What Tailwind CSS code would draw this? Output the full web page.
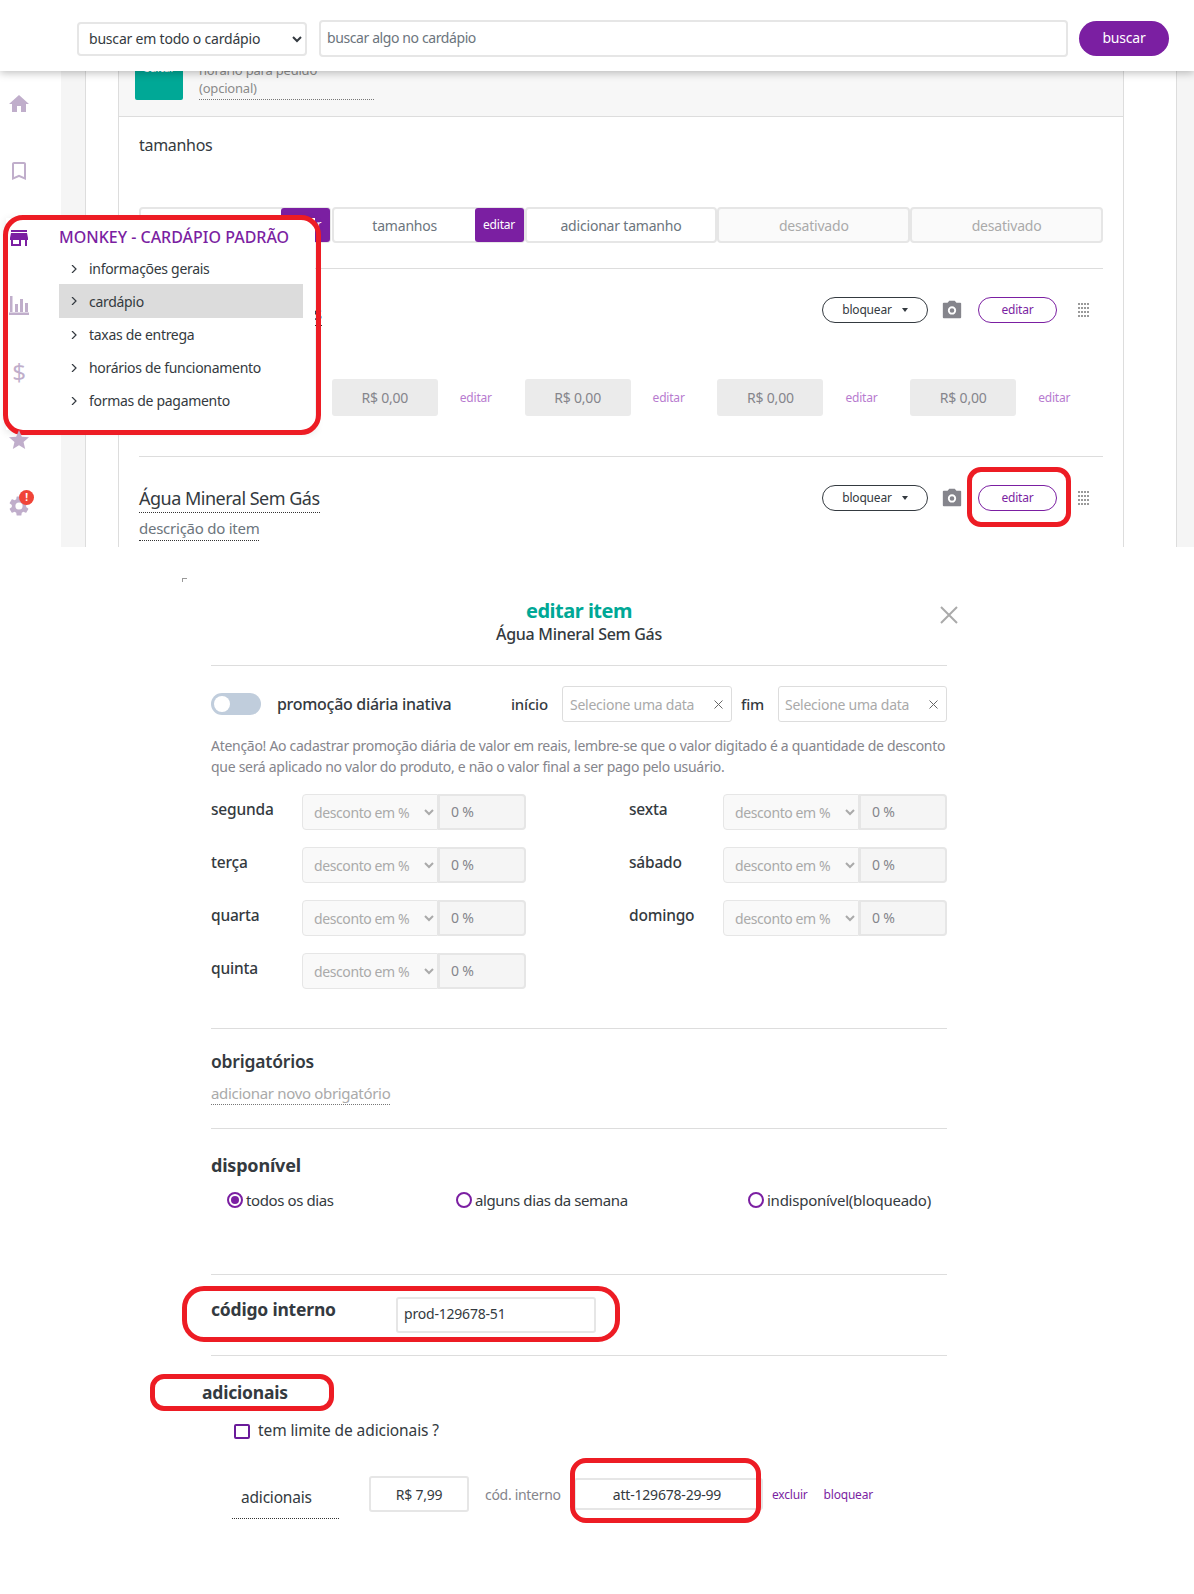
<!DOCTYPE html>
<html lang="pt-BR">
<head>
  <meta charset="UTF-8">
  <title>Editar item</title>
  <script src="https://cdn.jsdelivr.net/npm/@tailwindcss/browser@4"></script>
</head>
<body class="bg-white font-['Noto_Sans',sans-serif] text-[#343a40] text-[14px] tracking-[-0.2px]">

  <!-- top screenshot -->
  <div class="relative h-[547px] overflow-hidden">
    <header class="relative z-10 h-[71px] bg-white shadow-[0_2px_8px_rgba(0,0,0,0.25)] flex items-start pt-[20px] pl-[77px]">
      <select class="mt-[2px] w-[230px] h-[34px] border-2 border-[#e6e6e6] rounded bg-white pl-[6px] pr-[2px] pb-[2px] text-[14px] text-[#343a40]">
        <option>buscar em todo o cardápio</option>
      </select>
      <div class="ml-[12px] w-[749px] h-[37px] border-2 border-[#e6e6e6] rounded flex items-center pl-[6px] pb-[2px] text-[#6c757d] tracking-[-0.4px]">buscar algo no cardápio</div>
      <button class="ml-[11px] mt-px w-[90px] h-[35px] rounded-full bg-[#7b1fa2] text-white text-[14px] pb-[2px]">buscar</button>
    </header>

    <nav class="absolute z-[5] left-0 top-[70px] w-[38px] flex flex-col items-center text-[#c0aecb]">
      <div class="h-[67px] flex items-center shrink-0">
        <svg class="w-[24px] h-[24px]" viewBox="0 0 24 24" fill="currentColor"><path d="M10 20v-6h4v6h5v-8h3L12 3 2 12h3v8z"/></svg>
      </div>
      <div class="h-[67px] flex items-center shrink-0">
        <svg class="w-[24px] h-[24px]" viewBox="0 0 24 24" fill="currentColor"><path d="M17 3H7c-1.100 0-2 .9-2 2v16l7-3 7 3V5c0-1.100-.9-2-2-2zm0 15l-5-2.180L7 18V5h10v13z"/></svg>
      </div>
      <div class="h-[67px] flex items-center shrink-0 text-[#7b1fa2]">
        <svg class="w-[24px] h-[24px]" viewBox="0 0 24 24" fill="currentColor"><path d="M20 4H4v2h16V4zm1 10v-2l-1-5H4l-1 5v2h1v6h10v-6h4v6h2v-6h1zm-9 4H6v-4h6v4z"/></svg>
      </div>
      <div class="h-[67px] flex items-center shrink-0">
        <svg class="w-[22px] h-[22px]" viewBox="0 0 22 22" fill="currentColor"><path d="M2 2h2.500v16H2zM7 10h3v8H7zM12 5h3v13h-3zM17 9h3v9h-3zM1 18.500h20V21H1z"/></svg>
      </div>
      <div class="h-[67px] flex items-center shrink-0 text-[24px] leading-none">$</div>
      <div class="h-[67px] flex items-center shrink-0 pt-[2px]">
        <svg class="w-[24px] h-[24px]" viewBox="0 0 24 24" fill="currentColor"><path d="M12 17.270L18.180 21l-1.640-7.030L22 9.240l-7.190-.61L12 2 9.190 8.630 2 9.240l5.460 4.730L5.820 21z"/></svg>
      </div>
      <div class="h-[67px] flex items-center shrink-0 relative">
        <svg class="w-[24px] h-[24px]" viewBox="0 0 24 24" fill="currentColor"><path d="M19.140 12.940c.04-.3.06-.61.06-.94s-.02-.64-.07-.94l2.030-1.580a.49.49 0 0 0 .12-.61l-1.920-3.320a.49.49 0 0 0-.59-.22l-2.390.96a7 7 0 0 0-1.620-.94l-.36-2.540a.48.48 0 0 0-.48-.41h-3.840a.48.48 0 0 0-.47.41l-.36 2.540c-.59.24-1.130.57-1.620.94l-2.390-.96a.48.48 0 0 0-.59.22L2.740 8.870a.48.48 0 0 0 .12.61l2.030 1.580c-.05.3-.09.63-.09.94s.02.64.07.94l-2.030 1.580a.49.49 0 0 0-.12.61l1.920 3.320c.12.22.37.29.59.22l2.390-.96c.5.38 1.030.7 1.620.94l.36 2.540c.05.24.24.41.48.41h3.840c.24 0 .44-.17.47-.41l.36-2.540c.59-.24 1.130-.56 1.620-.94l2.390.96c.22.08.47 0 .59-.22l1.920-3.320a.48.48 0 0 0-.12-.61l-2.010-1.580zM12 15.600A3.600 3.600 0 1 1 12 8.400a3.600 3.600 0 0 1 0 7.200z"/></svg>
        <span class="absolute left-[12px] top-[18px] w-[15px] h-[15px] rounded-full bg-[#f04438] text-white text-[10px] leading-[15px] text-center font-bold">!</span>
      </div>
    </nav>

    <div class="flex h-[476px]">
      <div class="w-[61px]"></div>
      <div class="w-[25px] bg-[#f5f5f5] border-r border-[#dddddd]"></div>
      <div class="w-[32px]"></div>

      <main class="w-[1006px] border-x border-[#dddddd]">
        <div class="h-[46px] bg-[#f7f7f7] border-b border-[#dddddd] relative">
          <div class="absolute left-[16px] -top-[20px] flex gap-[16px]">
            <div class="w-[48px] h-[49px] bg-[#00a896] rounded-[2px] text-white text-[12px] text-center pt-[8px]">editar</div>
            <div class="w-[175px] h-[49px] border-b border-dotted border-[#777777] text-[#8a8a8a] text-[13px] leading-[18px] pt-[10px]">horário para pedido<br>(opcional)</div>
          </div>
        </div>

        <div class="px-[20px]">
          <div class="h-[90px] pt-[16px] text-[16px] leading-[24px] tracking-[-0.3px]">tamanhos</div>
          <div class="grid grid-cols-5 w-[964px] h-[36px] text-[14px]">
            <div class="flex border-2 border-[#e6e6e6] rounded mr-px">
              <div class="flex-1"></div>
              <div class="w-[49px] -m-[1px] bg-[#7b1fa2] rounded-[3px] text-white text-[12px] flex items-center justify-center">editar</div>
            </div>
            <div class="flex border-2 border-[#e6e6e6] rounded">
              <div class="flex-1 flex items-center justify-center text-[#6c757d]">tamanhos</div>
              <div class="w-[49px] -m-[1px] bg-[#7b1fa2] rounded-[3px] text-white text-[12px] flex items-center justify-center">editar</div>
            </div>
            <div class="flex items-center justify-center border-2 border-[#e6e6e6] rounded text-[#6c757d]">adicionar tamanho</div>
            <div class="flex items-center justify-center border-2 border-[#e6e6e6] rounded bg-[#fafafa] text-[#aaaaaa]">desativado</div>
            <div class="flex items-center justify-center border-2 border-[#e6e6e6] rounded bg-[#fafafa] text-[#aaaaaa]">desativado</div>
          </div>

          <div class="mt-[25px] h-[189px] border-y border-[#dddddd] w-[964px]">
            <div class="flex justify-between items-start pt-[28px] pr-[14px]">
              <div class="w-[183px] mt-[4px] border-b border-dotted border-[#333333] text-[18px] leading-[24px] text-right">s</div>
              <div class="flex items-center">
                <button class="w-[106px] h-[26px] rounded-full border border-[#343a40] text-[12px] flex items-center justify-center gap-[10px]">bloquear <span class="w-0 h-0 border-x-[3px] border-x-transparent border-t-[4px] border-t-[#343a40]"></span></button>
                <svg class="ml-[13px] w-[22px] h-[22px] text-[#85858c]" viewBox="0 0 24 24" fill="currentColor"><path fill-rule="evenodd" d="M9 2L7.170 4H3a1 1 0 0 0-1 1v15a1 1 0 0 0 1 1h18a1 1 0 0 0 1-1V5a1 1 0 0 0-1-1h-4.170L15 2zM12 8a4.500 4.500 0 1 1 0 9 4.500 4.500 0 0 1 0-9zm0 2a2.500 2.500 0 1 0 0 5 2.500 2.500 0 0 0 0-5z"/></svg>
                <button class="ml-[15px] w-[79px] h-[26px] rounded-full border border-[#7b1fa2] text-[#7b1fa2] text-[12px]">editar</button>
                <svg class="ml-[21px] w-[11px] h-[14px] text-[#9a9a9a]" viewBox="0 0 11 14" fill="currentColor"><path d="M0 0h2v2H0zM3 0h2v2H3zM6 0h2v2H6zM9 0h2v2H9zM0 4h2v2H0zM3 4h2v2H3zM6 4h2v2H6zM9 4h2v2H9zM0 8h2v2H0zM3 8h2v2H3zM6 8h2v2H6zM9 8h2v2H9zM0 12h2v2H0zM3 12h2v2H3zM6 12h2v2H6zM9 12h2v2H9z"/></svg>
              </div>
            </div>
            <div class="grid grid-cols-5 w-[964px] mt-[53px]">
              <div></div>
              <div class="flex items-center gap-[22px]"><div class="w-[106px] h-[37px] bg-[#ebebeb] rounded-[3px] flex items-center justify-center text-[#85858c]">R$ 0,00</div><span class="text-[#b77bcf] text-[12px]">editar</span></div>
              <div class="flex items-center gap-[22px]"><div class="w-[106px] h-[37px] bg-[#ebebeb] rounded-[3px] flex items-center justify-center text-[#85858c]">R$ 0,00</div><span class="text-[#b77bcf] text-[12px]">editar</span></div>
              <div class="flex items-center gap-[22px]"><div class="w-[106px] h-[37px] bg-[#ebebeb] rounded-[3px] flex items-center justify-center text-[#85858c]">R$ 0,00</div><span class="text-[#b77bcf] text-[12px]">editar</span></div>
              <div class="flex items-center gap-[22px]"><div class="w-[106px] h-[37px] bg-[#ebebeb] rounded-[3px] flex items-center justify-center text-[#85858c]">R$ 0,00</div><span class="text-[#b77bcf] text-[12px]">editar</span></div>
            </div>
          </div>

          <div class="flex justify-between items-start pt-[28px] pr-[14px] w-[964px]">
            <div>
              <div class="w-fit border-b border-dotted border-[#333333] text-[18px] leading-[27px] tracking-[-0.5px]">Água Mineral Sem Gás</div>
              <div class="w-fit mt-[4px] border-b border-dotted border-[#333333] text-[15px] leading-[23px] text-[#6c757d] tracking-[-0.25px]">descrição do item</div>
            </div>
            <div class="flex items-center">
              <button class="w-[106px] h-[26px] rounded-full border border-[#343a40] text-[12px] flex items-center justify-center gap-[10px]">bloquear <span class="w-0 h-0 border-x-[3px] border-x-transparent border-t-[4px] border-t-[#343a40]"></span></button>
              <svg class="ml-[13px] w-[22px] h-[22px] text-[#85858c]" viewBox="0 0 24 24" fill="currentColor"><path fill-rule="evenodd" d="M9 2L7.170 4H3a1 1 0 0 0-1 1v15a1 1 0 0 0 1 1h18a1 1 0 0 0 1-1V5a1 1 0 0 0-1-1h-4.170L15 2zM12 8a4.500 4.500 0 1 1 0 9 4.500 4.500 0 0 1 0-9zm0 2a2.500 2.500 0 1 0 0 5 2.500 2.500 0 0 0 0-5z"/></svg>
              <button class="ml-[15px] w-[79px] h-[26px] rounded-full border border-[#7b1fa2] text-[#7b1fa2] text-[12px]">editar</button>
              <svg class="ml-[21px] w-[11px] h-[14px] text-[#9a9a9a]" viewBox="0 0 11 14" fill="currentColor"><path d="M0 0h2v2H0zM3 0h2v2H3zM6 0h2v2H6zM9 0h2v2H9zM0 4h2v2H0zM3 4h2v2H3zM6 4h2v2H6zM9 4h2v2H9zM0 8h2v2H0zM3 8h2v2H3zM6 8h2v2H6zM9 8h2v2H9zM0 12h2v2H0zM3 12h2v2H3zM6 12h2v2H6zM9 12h2v2H9z"/></svg>
            </div>
          </div>
        </div>
      </main>

      <div class="w-[52px]"></div>
      <div class="flex-1 bg-[#f5f5f5] border-l border-[#dddddd]"></div>
    </div>

    <!-- hover menu -->
    <div class="absolute left-[6px] top-[218px] w-[309px] h-[212px] bg-white shadow-[0_2px_8px_rgba(0,0,0,0.12)] pl-[53px] pr-[12px]">
      <div class="h-[35px] pt-[8px] text-[#7b1fa2] text-[16px] leading-[22px] font-medium tracking-[0px] whitespace-nowrap">MONKEY - CARDÁPIO PADRÃO</div>
      <ul class="text-[14px] tracking-[-0.3px]">
        <li class="h-[31px] flex items-center"><svg class="w-[30px] h-[8px] pl-[12px] text-[#343a40]" viewBox="0 0 18 8" fill="none" stroke="currentColor" stroke-width="1.200" preserveAspectRatio="xMinYMid meet"><path d="M1 0l4 4-4 4"/></svg>informações gerais</li>
        <li class="h-[34px] flex items-center bg-[#dcdcdc]"><svg class="w-[30px] h-[8px] pl-[12px] text-[#343a40]" viewBox="0 0 18 8" fill="none" stroke="currentColor" stroke-width="1.200" preserveAspectRatio="xMinYMid meet"><path d="M1 0l4 4-4 4"/></svg>cardápio</li>
        <li class="h-[33px] flex items-center"><svg class="w-[30px] h-[8px] pl-[12px] text-[#343a40]" viewBox="0 0 18 8" fill="none" stroke="currentColor" stroke-width="1.200" preserveAspectRatio="xMinYMid meet"><path d="M1 0l4 4-4 4"/></svg>taxas de entrega</li>
        <li class="h-[33px] flex items-center"><svg class="w-[30px] h-[8px] pl-[12px] text-[#343a40]" viewBox="0 0 18 8" fill="none" stroke="currentColor" stroke-width="1.200" preserveAspectRatio="xMinYMid meet"><path d="M1 0l4 4-4 4"/></svg>horários de funcionamento</li>
        <li class="h-[33px] flex items-center"><svg class="w-[30px] h-[8px] pl-[12px] text-[#343a40]" viewBox="0 0 18 8" fill="none" stroke="currentColor" stroke-width="1.200" preserveAspectRatio="xMinYMid meet"><path d="M1 0l4 4-4 4"/></svg>formas de pagamento</li>
      </ul>
    </div>
    <div class="absolute left-[3px] top-[215px] w-[318px] h-[220px] border-[5px] border-[#ed1c24] rounded-[20px]"></div>
    <div class="absolute left-[967px] top-[467px] w-[104px] h-[60px] border-[5px] border-[#ed1c24] rounded-[14px]"></div>
  </div>

  <!-- bottom screenshot -->
  <div class="relative h-[1047px]">
    <div class="absolute left-[182px] top-[31px] w-[5px] h-[4px] border-l border-t border-[#999999]"></div>

    <div class="ml-[211px] w-[736px]">
      <div class="relative h-[119px] border-b border-[#dddddd] pt-[51px] text-center">
        <div class="text-[#00a896] text-[20px] leading-[26px] font-bold tracking-[-0.5px]">editar item</div>
        <div class="text-[16px] leading-[20px] font-medium tracking-[-0.3px]">Água Mineral Sem Gás</div>
        <svg class="absolute right-[-11px] top-[59px] w-[18px] h-[18px] text-[#aaaaaa]" viewBox="0 0 18 18" fill="none" stroke="currentColor" stroke-width="2"><path d="M1 1l16 16M17 1L1 17"/></svg>
      </div>

      <div class="mt-[20px] h-[36px] flex items-center">
        <div class="w-[300px] flex items-center">
          <div class="relative w-[50px] h-[22px] rounded-full bg-[#c0cddc]"><span class="absolute left-[3px] top-[3px] w-[16px] h-[16px] rounded-full bg-white"></span></div>
          <span class="ml-[16px] text-[16px] font-medium tracking-[-0.3px]">promoção diária inativa</span>
        </div>
        <span class="w-[51px] text-[15px] font-medium">início</span>
        <div class="w-[170px] h-[36px] border border-[#dddddd] rounded-[3px] flex items-center justify-between pl-[7px] pr-[8px] text-[#aaaaaa] tracking-[-0.25px]">Selecione uma data <svg class="w-[9px] h-[9px] text-[#666666]" viewBox="0 0 9 9" fill="none" stroke="currentColor"><path d="M0.500 0.500l8 8M8.500 0.500l-8 8"/></svg></div>
        <span class="w-[46px] pl-[9px] text-[15px] font-medium">fim</span>
        <div class="w-[169px] h-[36px] border border-[#dddddd] rounded-[3px] flex items-center justify-between pl-[6px] pr-[8px] text-[#aaaaaa] tracking-[-0.25px]">Selecione uma data <svg class="w-[9px] h-[9px] text-[#666666]" viewBox="0 0 9 9" fill="none" stroke="currentColor"><path d="M0.500 0.500l8 8M8.500 0.500l-8 8"/></svg></div>
      </div>

      <p class="mt-[13px] text-[14px] leading-[21px] text-[#85858c] tracking-[-0.29px] whitespace-nowrap">Atenção! Ao cadastrar promoção diária de valor em reais, lembre-se que o valor digitado é a quantidade de desconto<br>que será aplicado no valor do produto, e não o valor final a ser pago pelo usuário.</p>

      <div class="mt-[17px] grid grid-cols-[418px_318px] gap-y-[17px] text-[15.5px] font-medium">
        <div class="flex"><span class="w-[91px] leading-[30px]">segunda</span><select disabled class="w-[136px] h-[36px] border border-[#e6e6e6] rounded-l bg-[#f9f9f9] pl-[7px] text-[14px] font-normal text-[#aaaaaa] tracking-[-0.4px]"><option>desconto em %</option></select><div class="w-[88px] h-[36px] border-2 border-[#e6e6e6] rounded-r bg-[#f5f5f5] pl-[11px] leading-[31px] text-[14px] font-normal text-[#85858c]">0 %</div></div>
        <div class="flex"><span class="w-[94px] leading-[30px]">sexta</span><select disabled class="w-[136px] h-[36px] border border-[#e6e6e6] rounded-l bg-[#f9f9f9] pl-[7px] text-[14px] font-normal text-[#aaaaaa] tracking-[-0.4px]"><option>desconto em %</option></select><div class="w-[88px] h-[36px] border-2 border-[#e6e6e6] rounded-r bg-[#f5f5f5] pl-[11px] leading-[31px] text-[14px] font-normal text-[#85858c]">0 %</div></div>
        <div class="flex"><span class="w-[91px] leading-[30px]">terça</span><select disabled class="w-[136px] h-[36px] border border-[#e6e6e6] rounded-l bg-[#f9f9f9] pl-[7px] text-[14px] font-normal text-[#aaaaaa] tracking-[-0.4px]"><option>desconto em %</option></select><div class="w-[88px] h-[36px] border-2 border-[#e6e6e6] rounded-r bg-[#f5f5f5] pl-[11px] leading-[31px] text-[14px] font-normal text-[#85858c]">0 %</div></div>
        <div class="flex"><span class="w-[94px] leading-[30px]">sábado</span><select disabled class="w-[136px] h-[36px] border border-[#e6e6e6] rounded-l bg-[#f9f9f9] pl-[7px] text-[14px] font-normal text-[#aaaaaa] tracking-[-0.4px]"><option>desconto em %</option></select><div class="w-[88px] h-[36px] border-2 border-[#e6e6e6] rounded-r bg-[#f5f5f5] pl-[11px] leading-[31px] text-[14px] font-normal text-[#85858c]">0 %</div></div>
        <div class="flex"><span class="w-[91px] leading-[30px]">quarta</span><select disabled class="w-[136px] h-[36px] border border-[#e6e6e6] rounded-l bg-[#f9f9f9] pl-[7px] text-[14px] font-normal text-[#aaaaaa] tracking-[-0.4px]"><option>desconto em %</option></select><div class="w-[88px] h-[36px] border-2 border-[#e6e6e6] rounded-r bg-[#f5f5f5] pl-[11px] leading-[31px] text-[14px] font-normal text-[#85858c]">0 %</div></div>
        <div class="flex"><span class="w-[94px] leading-[30px]">domingo</span><select disabled class="w-[136px] h-[36px] border border-[#e6e6e6] rounded-l bg-[#f9f9f9] pl-[7px] text-[14px] font-normal text-[#aaaaaa] tracking-[-0.4px]"><option>desconto em %</option></select><div class="w-[88px] h-[36px] border-2 border-[#e6e6e6] rounded-r bg-[#f5f5f5] pl-[11px] leading-[31px] text-[14px] font-normal text-[#85858c]">0 %</div></div>
        <div class="flex"><span class="w-[91px] leading-[30px]">quinta</span><select disabled class="w-[136px] h-[36px] border border-[#e6e6e6] rounded-l bg-[#f9f9f9] pl-[7px] text-[14px] font-normal text-[#aaaaaa] tracking-[-0.4px]"><option>desconto em %</option></select><div class="w-[88px] h-[36px] border-2 border-[#e6e6e6] rounded-r bg-[#f5f5f5] pl-[11px] leading-[31px] text-[14px] font-normal text-[#85858c]">0 %</div></div>
      </div>

      <div class="mt-[39px] border-t border-[#dddddd] pt-[20px]">
        <h3 class="text-[17.5px] leading-[24px] font-semibold">obrigatórios</h3>
        <div class="mt-[9px] mb-px w-fit border-b border-dotted border-[#777777] text-[15px] leading-[22px] text-[#aaaaaa] tracking-[-0.32px]">adicionar novo obrigatório</div>
      </div>

      <div class="mt-[23px] border-t border-[#dddddd] pt-[23px]">
        <h3 class="text-[18px] leading-[26px] font-bold">disponível</h3>
        <div class="mt-[12px] flex h-[20px] items-center text-[15px] tracking-[-0.4px]">
          <span class="ml-[16px] w-[16px] h-[16px] rounded-full border-2 border-[#7b1fa2] flex items-center justify-center"><span class="w-[8px] h-[8px] rounded-full bg-[#7b1fa2]"></span></span>
          <span class="ml-[3px] w-[210px]">todos os dias</span>
          <span class="w-[16px] h-[16px] rounded-full border-2 border-[#7b1fa2]"></span>
          <span class="ml-[3px] w-[273px]">alguns dias da semana</span>
          <span class="w-[16px] h-[16px] rounded-full border-2 border-[#7b1fa2]"></span>
          <span class="ml-[3px] whitespace-nowrap tracking-[-0.25px]">indisponível(bloqueado)</span>
        </div>
      </div>

      <div class="mt-[64px] border-t border-[#dddddd] pt-[22px] flex items-start">
        <h3 class="w-[185px] text-[17.5px] leading-[24px] font-bold">código interno</h3>
        <div class="w-[200px] h-[36px] border-2 border-[#e6e6e6] rounded-[3px] flex items-center pl-[6px] pb-[3px]">prod-129678-51</div>
      </div>

      <div class="mt-[22px] border-t border-[#dddddd] pt-[23px]">
        <h3 class="-ml-[9px] text-[17.5px] leading-[26px] font-bold">adicionais</h3>
        <div class="mt-[16px] h-[20px] ml-[23px] flex items-center text-[15.5px] tracking-[-0.1px]">
          <span class="w-[16px] h-[15px] border-2 border-[#6a1b9a] rounded-[2px]"></span>
          <span class="ml-[8px]">tem limite de adicionais ?</span>
        </div>
        <div class="mt-[35px] flex items-start ml-[21px]">
          <div class="w-[107px] h-[43px] border-b border-dotted border-[#333333] pl-[9px] pt-[9px] text-[15.5px] leading-[24px]">adicionais</div>
          <div class="ml-[30px] w-[100px] h-[36px] border-2 border-[#e6e6e6] rounded-[3px] flex items-center justify-center">R$ 7,99</div>
          <span class="ml-[16px] w-[89px] h-[36px] flex items-center text-[#85858c] whitespace-nowrap tracking-[-0.3px]">cód. interno</span>
          <div class="w-[189px] h-[32px] mt-[2px] border-2 border-[#e6e6e6] rounded-[3px] flex items-center justify-center pr-[3px]">att-129678-29-99</div>
          <span class="ml-[9px] h-[36px] pt-px flex items-center text-[#7b1fa2] text-[12px]">excluir</span>
          <span class="ml-[16px] h-[36px] pt-px flex items-center text-[#7b1fa2] text-[12px]">bloquear</span>
        </div>
      </div>
    </div>

    <div class="absolute left-[182px] top-[739px] w-[438px] h-[56px] border-[5px] border-[#ed1c24] rounded-[22px]"></div>
    <div class="absolute left-[150px] top-[827px] w-[184px] h-[37px] border-[5px] border-[#ed1c24] rounded-[14px]"></div>
    <div class="absolute left-[570px] top-[911px] w-[191px] h-[65px] border-[5px] border-[#ed1c24] rounded-[16px]"></div>
  </div>
</body>
</html>
